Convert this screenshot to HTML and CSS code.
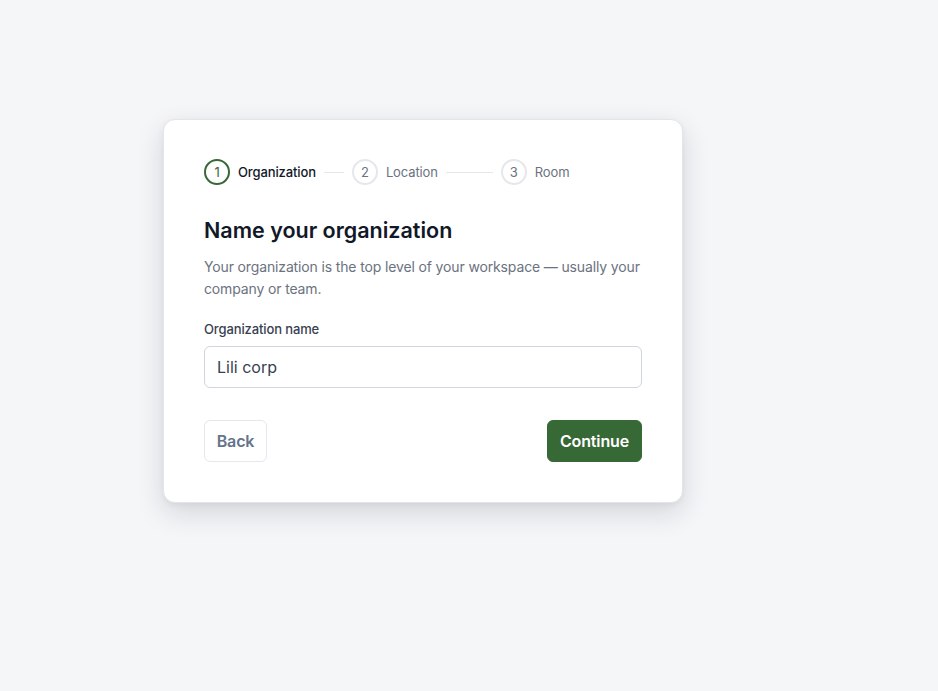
FILE: index.html
```html
<!DOCTYPE html>
<html lang="en">
<head>
<meta charset="utf-8">
<title>Name your organization</title>
<link rel="stylesheet" href="styles.css">
</head>
<body>
<main class="page">
  <section class="card">
    <ol class="steps">
      <li class="step active"><span class="num">1</span><span class="label">Organization</span></li>
      <li class="sep sep-short"></li>
      <li class="step"><span class="num">2</span><span class="label">Location</span></li>
      <li class="sep sep-long"></li>
      <li class="step"><span class="num">3</span><span class="label">Room</span></li>
    </ol>
    <h1 class="title">Name your organization</h1>
    <p class="desc">Your organization is the top level of your workspace — usually your company or team.</p>
    <label class="field-label" for="org">Organization name</label>
    <input class="input" id="org" type="text" value="Lili corp">
    <div class="actions">
      <button class="btn btn-back" type="button">Back</button>
      <button class="btn btn-primary" type="button">Continue</button>
    </div>
  </section>
</main>
</body>
</html>
```
FILE: styles.css
```css
* { box-sizing: border-box; }
html, body { margin: 0; padding: 0; }
body {
  background: #f5f6f8;
  font-family: Inter, "Noto Sans", "Liberation Sans", sans-serif;
  color: #111827;
  height: 691px;
}
.page {
  padding: 119px 0 0 163px;
}
.card {
  width: 520px;
  background: #fff;
  border: 1px solid #e3e5e8;
  border-radius: 12px;
  box-shadow: 0 10px 28px rgba(15, 23, 42, 0.14), 0 2px 6px rgba(15, 23, 42, 0.05);
  padding: 39px 40px 40px 40px;
}
.steps {
  list-style: none;
  margin: 0;
  padding: 0;
  display: flex;
  align-items: center;
  height: 26px;
}
.step {
  display: flex;
  align-items: center;
  gap: 8px;
  font-size: 13px;
  color: #6b7280;
  letter-spacing: -0.12px;
}
.num {
  width: 26px;
  height: 26px;
  border-radius: 50%;
  border: 2px solid #e5e7eb;
  display: flex;
  align-items: center;
  justify-content: center;
  font-size: 13px;
  color: #6b7280;
}
.step.active .num {
  border-color: #376937;
  color: #376937;
}
.step.active .label {
  color: #111827;
  font-weight: 500;
}
.sep {
  height: 1px;
  background: #e5e7eb;
  margin: 0 8px;
}
.sep-short { width: 20px; }
.sep-long { width: 47px; }
.title {
  margin: 31px 0 0;
  font-size: 21.5px;
  font-weight: 600;
  line-height: 28px;
  color: #111827;
}
.desc {
  margin: 12px 0 0;
  font-size: 14px;
  line-height: 22px;
  color: #6b7280;
  letter-spacing: -0.14px;
}
.field-label {
  display: block;
  margin-top: 20px;
  font-size: 13px;
  font-weight: 500;
  line-height: 18px;
  color: #374151;
  letter-spacing: -0.12px;
}
.input {
  display: block;
  width: 100%;
  height: 42px;
  margin-top: 8px;
  padding: 0 12px;
  border: 1px solid #cfd6de;
  border-radius: 6px;
  font-family: inherit;
  font-size: 16px;
  color: #374151;
  background: #fff;
}
.actions {
  display: flex;
  justify-content: space-between;
  margin-top: 32px;
}
.btn {
  height: 42px;
  border-radius: 6px;
  font-family: inherit;
  font-size: 16px;
  font-weight: 600;
  padding: 0;
  cursor: pointer;
  letter-spacing: -0.15px;
}
.btn-back {
  width: 63px;
  background: #fff;
  border: 1px solid #e4e7ec;
  color: #64748b;
}
.btn-primary {
  width: 95px;
  background: #376937;
  border: 1px solid #376937;
  color: #fff;
}
```
